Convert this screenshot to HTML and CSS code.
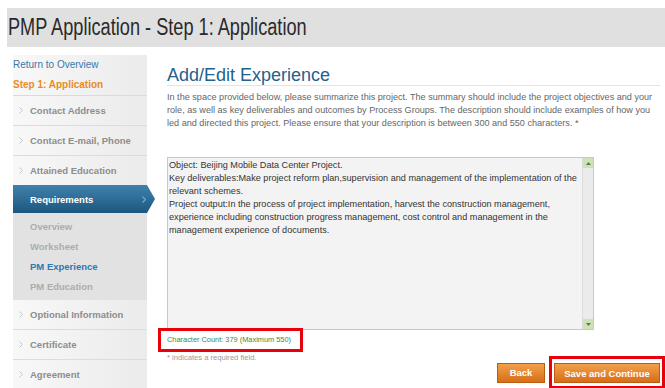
FILE: index.html
```html
<!DOCTYPE html>
<html>
<head>
<meta charset="utf-8">
<title>PMP Application</title>
<link rel="stylesheet" href="styles.css">
</head>
<body>
<div class="page">
  <header class="topbar">
    <h1 class="title">PMP Application - Step 1: Application</h1>
  </header>
  <div class="layout">
    <nav class="sidebar">
      <a class="return">Return to Overview</a>
      <div class="step">Step 1: Application</div>
      <ul class="menu">
        <li class="item"><svg class="chev" width="4" height="7" viewBox="0 0 4 7"><path d="M0.5 0.5 L3.5 3.5 L0.5 6.5" fill="none" stroke="#c4c4c4" stroke-width="1"/></svg>Contact Address</li>
        <li class="item"><svg class="chev" width="4" height="7" viewBox="0 0 4 7"><path d="M0.5 0.5 L3.5 3.5 L0.5 6.5" fill="none" stroke="#c4c4c4" stroke-width="1"/></svg>Contact E-mail, Phone</li>
        <li class="item item-plain"><svg class="chev" width="4" height="7" viewBox="0 0 4 7"><path d="M0.5 0.5 L3.5 3.5 L0.5 6.5" fill="none" stroke="#c4c4c4" stroke-width="1"/></svg>Attained Education</li>
        <li class="active"><span>Requirements</span><svg class="chev-active" width="4" height="7" viewBox="0 0 4 7"><path d="M0.5 0.5 L3.5 3.5 L0.5 6.5" fill="none" stroke="#5fb0e0" stroke-width="1.2"/></svg></li>
        <li class="submenu">
          <div class="sub">Overview</div>
          <div class="sub">Worksheet</div>
          <div class="sub sub-current">PM Experience</div>
          <div class="sub">PM Education</div>
        </li>
        <li class="item"><svg class="chev" width="4" height="7" viewBox="0 0 4 7"><path d="M0.5 0.5 L3.5 3.5 L0.5 6.5" fill="none" stroke="#c4c4c4" stroke-width="1"/></svg>Optional Information</li>
        <li class="item"><svg class="chev" width="4" height="7" viewBox="0 0 4 7"><path d="M0.5 0.5 L3.5 3.5 L0.5 6.5" fill="none" stroke="#c4c4c4" stroke-width="1"/></svg>Certificate</li>
        <li class="item"><svg class="chev" width="4" height="7" viewBox="0 0 4 7"><path d="M0.5 0.5 L3.5 3.5 L0.5 6.5" fill="none" stroke="#c4c4c4" stroke-width="1"/></svg>Agreement</li>
      </ul>
    </nav>
    <main class="content">
      <h2 class="heading">Add/Edit Experience</h2>
      <p class="intro">In the space provided below, please summarize this project. The summary should include the project objectives and your role, as well as key deliverables and outcomes by Process Groups. The description should include examples of how you led and directed this project. Please ensure that your description is between 300 and 550 characters. *</p>
      <div class="textbox">
        <div class="textbox-text">Object: Beijing Mobile Data Center Project.<br>Key deliverables:Make project reform plan,supervision and management of the implementation of the relevant schemes.<br>Project output:In the process of project implementation, harvest the construction management, experience including construction progress management, cost control and management in the management experience of documents.</div>
        <div class="scroll">
          <div class="scroll-btn"><svg width="5" height="3" viewBox="0 0 5 3"><path d="M0 3 L2.5 0 L5 3 Z" fill="#5d7a4a"/></svg></div>
          <div class="scroll-btn"><svg width="5" height="3" viewBox="0 0 5 3"><path d="M0 0 L2.5 3 L5 0 Z" fill="#5d7a4a"/></svg></div>
        </div>
      </div>
      <div class="footer">
        <div class="counter-col">
          <div class="count">Character Count: 379 (Maximum 550)</div>
          <div class="required">* indicates a required field.</div>
        </div>
        <div class="actions">
          <button class="btn btn-back">Back</button>
          <div class="highlight"><button class="btn btn-save">Save and Continue</button></div>
        </div>
      </div>
    </main>
  </div>
</div>
</body>
</html>
```
FILE: styles.css
```css
* { box-sizing: border-box; margin: 0; padding: 0; }
html, body { background: #fff; }
body {
  font-family: "Liberation Sans", Arial, sans-serif;
  width: 665px;
  height: 388px;
  overflow: hidden;
}
.page { padding-top: 8px; }
.topbar {
  margin-left: 7px;
  height: 39px;
  background: #e0e0e0;
  padding-left: 1px;
}
.title {
  display: inline-block;
  font-weight: normal;
  font-size: 23px;
  line-height: 39px;
  color: #2a2a2a;
  white-space: nowrap;
  transform: scaleX(0.79);
  transform-origin: left center;
}
.layout { display: flex; margin-top: 8px; }

.sidebar {
  flex: none;
  width: 134px;
  margin-left: 13px;
  height: 340px;
  background: linear-gradient(to right, #f8f8f8, #ebebeb);
}
.return {
  display: block;
  height: 20px;
  line-height: 20px;
  font-size: 10px;
  color: #3b78a8;
}
.step {
  height: 21px;
  line-height: 20px;
  font-size: 10px;
  font-weight: bold;
  color: #e98c1d;
  border-bottom: 1px solid #dadada;
}
.menu { list-style: none; }
.item {
  height: 30px;
  display: flex;
  align-items: center;
  padding-left: 6px;
  font-size: 9.5px;
  font-weight: bold;
  color: #8d8d8d;
  border-bottom: 1px solid #dcdcdc;
}
.item-plain { height: 29px; border-bottom: none; }
.chev { flex: none; margin-right: 7px; }
.active {
  position: relative;
  width: calc(100% + 8px);
  height: 28px;
  display: flex;
  align-items: center;
  justify-content: space-between;
  padding-left: 17px;
  padding-right: 9px;
  font-size: 9.5px;
  font-weight: bold;
  color: #fff;
  background: linear-gradient(#3f82ad, #1c577f);
  clip-path: polygon(0 0, calc(100% - 8px) 0, 100% 50%, calc(100% - 8px) 100%, 0 100%);
}
.submenu {
  background: #e2e2e2;
  padding: 4px 0 3px 17px;
}
.sub {
  height: 20px;
  line-height: 20px;
  font-size: 9.5px;
  font-weight: bold;
  color: #acacac;
}
.sub-current { color: #2b78b2; }

.content {
  flex: 1;
  margin-left: 20px;
  min-width: 0;
}
.heading {
  margin-top: 10px;
  margin-right: 5px;
  font-size: 18px;
  font-weight: normal;
  line-height: 20px;
  color: #23618e;
  border-bottom: 1px solid #e4e4e4;
}
.intro {
  margin-top: 5px;
  width: 495px;
  font-size: 9.1px;
  line-height: 13px;
  color: #666;
}
.textbox {
  margin-top: 27px;
  width: 427px;
  height: 173px;
  border: 1px solid #c8c8c8;
  background: #f3f3f3;
  display: flex;
}
.textbox-text {
  flex: 1;
  padding: 1px 2px 0 1px;
  font-size: 9.15px;
  line-height: 13px;
  color: #333;
}
.scroll {
  flex: none;
  width: 11px;
  border-left: 1px solid #dcdcdc;
  background: #ebebeb;
  display: flex;
  flex-direction: column;
  justify-content: space-between;
}
.scroll-btn {
  height: 10px;
  background: #cde2b7;
  display: flex;
  align-items: center;
  justify-content: center;
}
.footer {
  display: flex;
  justify-content: space-between;
  align-items: flex-start;
}
.counter-col { margin-left: -9px; margin-top: -2px; }
.count {
  width: 145px;
  height: 24px;
  border: 3px solid #e8000b;
  padding: 0 6px;
  line-height: 18px;
  font-size: 7.4px;
  color: #3b8a3b;
  white-space: nowrap;
}
.required {
  padding-left: 9px;
  font-size: 7.6px;
  line-height: 12px;
  color: #9a9a9a;
}
.actions {
  display: flex;
  align-items: center;
  gap: 4px;
  margin-top: 26px;
}
.btn {
  height: 20px;
  border: 1px solid #b95d12;
  background: linear-gradient(#f2a04a, #d76e17);
  color: #fff;
  font-family: "Liberation Sans", Arial, sans-serif;
  font-weight: bold;
  font-size: 9.5px;
  display: flex;
  align-items: center;
  justify-content: center;
}
.btn-back { width: 48px; }
.btn-save { width: 106px; }
.highlight {
  border: 3px solid #e8000b;
  padding: 4px 2px 3px;
}
```
